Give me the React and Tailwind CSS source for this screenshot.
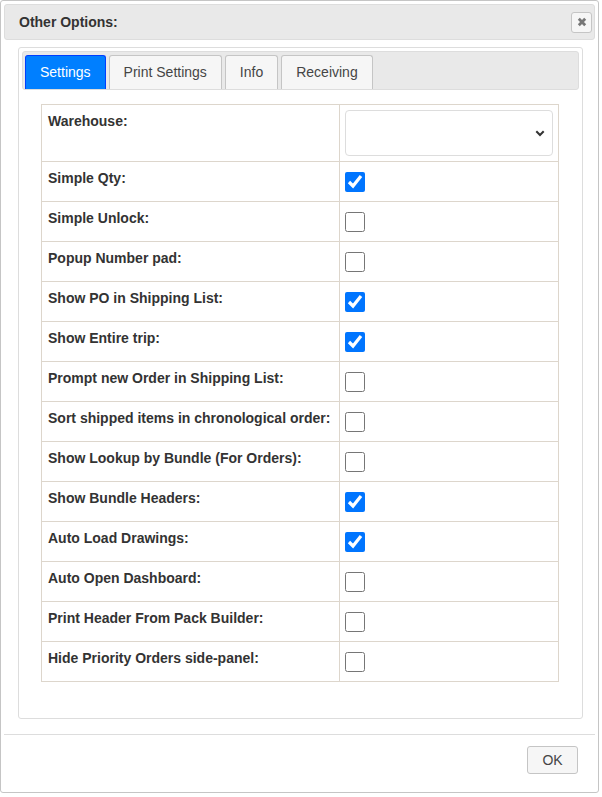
import React from "react";

const options = [
  { label: "Simple Qty:", checked: true },
  { label: "Simple Unlock:", checked: false },
  { label: "Popup Number pad:", checked: false },
  { label: "Show PO in Shipping List:", checked: true },
  { label: "Show Entire trip:", checked: true },
  { label: "Prompt new Order in Shipping List:", checked: false },
  { label: "Sort shipped items in chronological order:", checked: false },
  { label: "Show Lookup by Bundle (For Orders):", checked: false },
  { label: "Show Bundle Headers:", checked: true },
  { label: "Auto Load Drawings:", checked: true },
  { label: "Auto Open Dashboard:", checked: false },
  { label: "Print Header From Pack Builder:", checked: false },
  { label: "Hide Priority Orders side-panel:", checked: false },
];

const tabs = ["Settings", "Print Settings", "Info", "Receiving"];

function Tab({ name, active }) {
  return (
    <div
      className={`h-[34px] px-[14px] flex items-center text-[14px] rounded-t-[3px] border border-b-0 ${
        active
          ? "bg-[#007fff] border-[#003eff] text-white"
          : "bg-[#f6f6f6] border-[#c5c5c5] text-[#454545]"
      }`}
    >
      {name}
    </div>
  );
}

export default function App() {
  return (
    <div className="w-[599px] h-[793px] bg-white border border-[#c5c5c5] rounded-[3px] p-[3px] flex flex-col font-['Liberation_Sans',Arial,sans-serif] text-[#333]">
      {/* title bar */}
      <div className="h-[36px] shrink-0 bg-[#e9e9e9] border border-[#dddddd] rounded-[3px] flex items-center justify-between pl-[14px] pr-[2px]">
        <span className="font-bold text-[14px]">Other Options:</span>
        <button className="w-[21px] h-[21px] border border-[#c5c5c5] bg-[#f6f6f6] rounded-[3px] flex items-center justify-center">
          <svg width="10" height="10" viewBox="0 0 10 10">
            <path d="M1.8 1.8 L8.2 8.2 M8.2 1.8 L1.8 8.2" stroke="#777" strokeWidth="2.8" />
          </svg>
        </button>
      </div>

      {/* content */}
      <div className="pt-[7px] pl-[14px] pr-[12px]">
        <div className="h-[672px] border border-[#dddddd] rounded-[3px] p-[3px] flex flex-col">
          <div className="h-[39px] bg-[#e9e9e9] border border-[#dddddd] rounded-[3px] flex items-end gap-[3px] pl-[2px]">
            {tabs.map((t, i) => (
              <Tab key={t} name={t} active={i === 0} />
            ))}
          </div>
          <div className="pt-[14px] pl-[19px] pr-[20px]">
            <table className="w-full border-collapse text-[14px] leading-[18px]">
              <tbody>
                <tr className="h-[57px]">
                  <td className="w-[298px] border border-[#ddd6cc] align-top pt-[7px] px-[6px] font-bold">
                    Warehouse:
                  </td>
                  <td className="border border-[#ddd6cc] align-top pt-[5px] px-[5px]">
                    <div className="h-[46px] border border-[#dddddd] rounded-[4px] flex items-center justify-end pr-[7px]">
                      <svg width="10" height="7" viewBox="0 0 10 7">
                        <path d="M1.3 1.3 L5 5 L8.7 1.3" fill="none" stroke="#333" strokeWidth="2" />
                      </svg>
                    </div>
                  </td>
                </tr>
                {options.map((o) => (
                  <tr key={o.label} className="h-[40px]">
                    <td className="border border-[#ddd6cc] align-top pt-[7px] px-[6px] font-bold">
                      {o.label}
                    </td>
                    <td className="border border-[#ddd6cc] align-top pt-[10px] px-[5px]">
                      <input
                        type="checkbox"
                        defaultChecked={o.checked}
                        className="w-[20px] h-[20px] m-0 block accent-[#0075ff]"
                      />
                    </td>
                  </tr>
                ))}
              </tbody>
            </table>
          </div>
        </div>
      </div>

      {/* footer */}
      <div className="mt-[15px] border-t border-[#dddddd] flex justify-end pt-[11px] pr-[17px]">
        <button className="w-[51px] h-[28px] border border-[#c5c5c5] bg-[#f6f6f6] rounded-[3px] text-[14px] text-[#454545]">
          OK
        </button>
      </div>
    </div>
  );
}
